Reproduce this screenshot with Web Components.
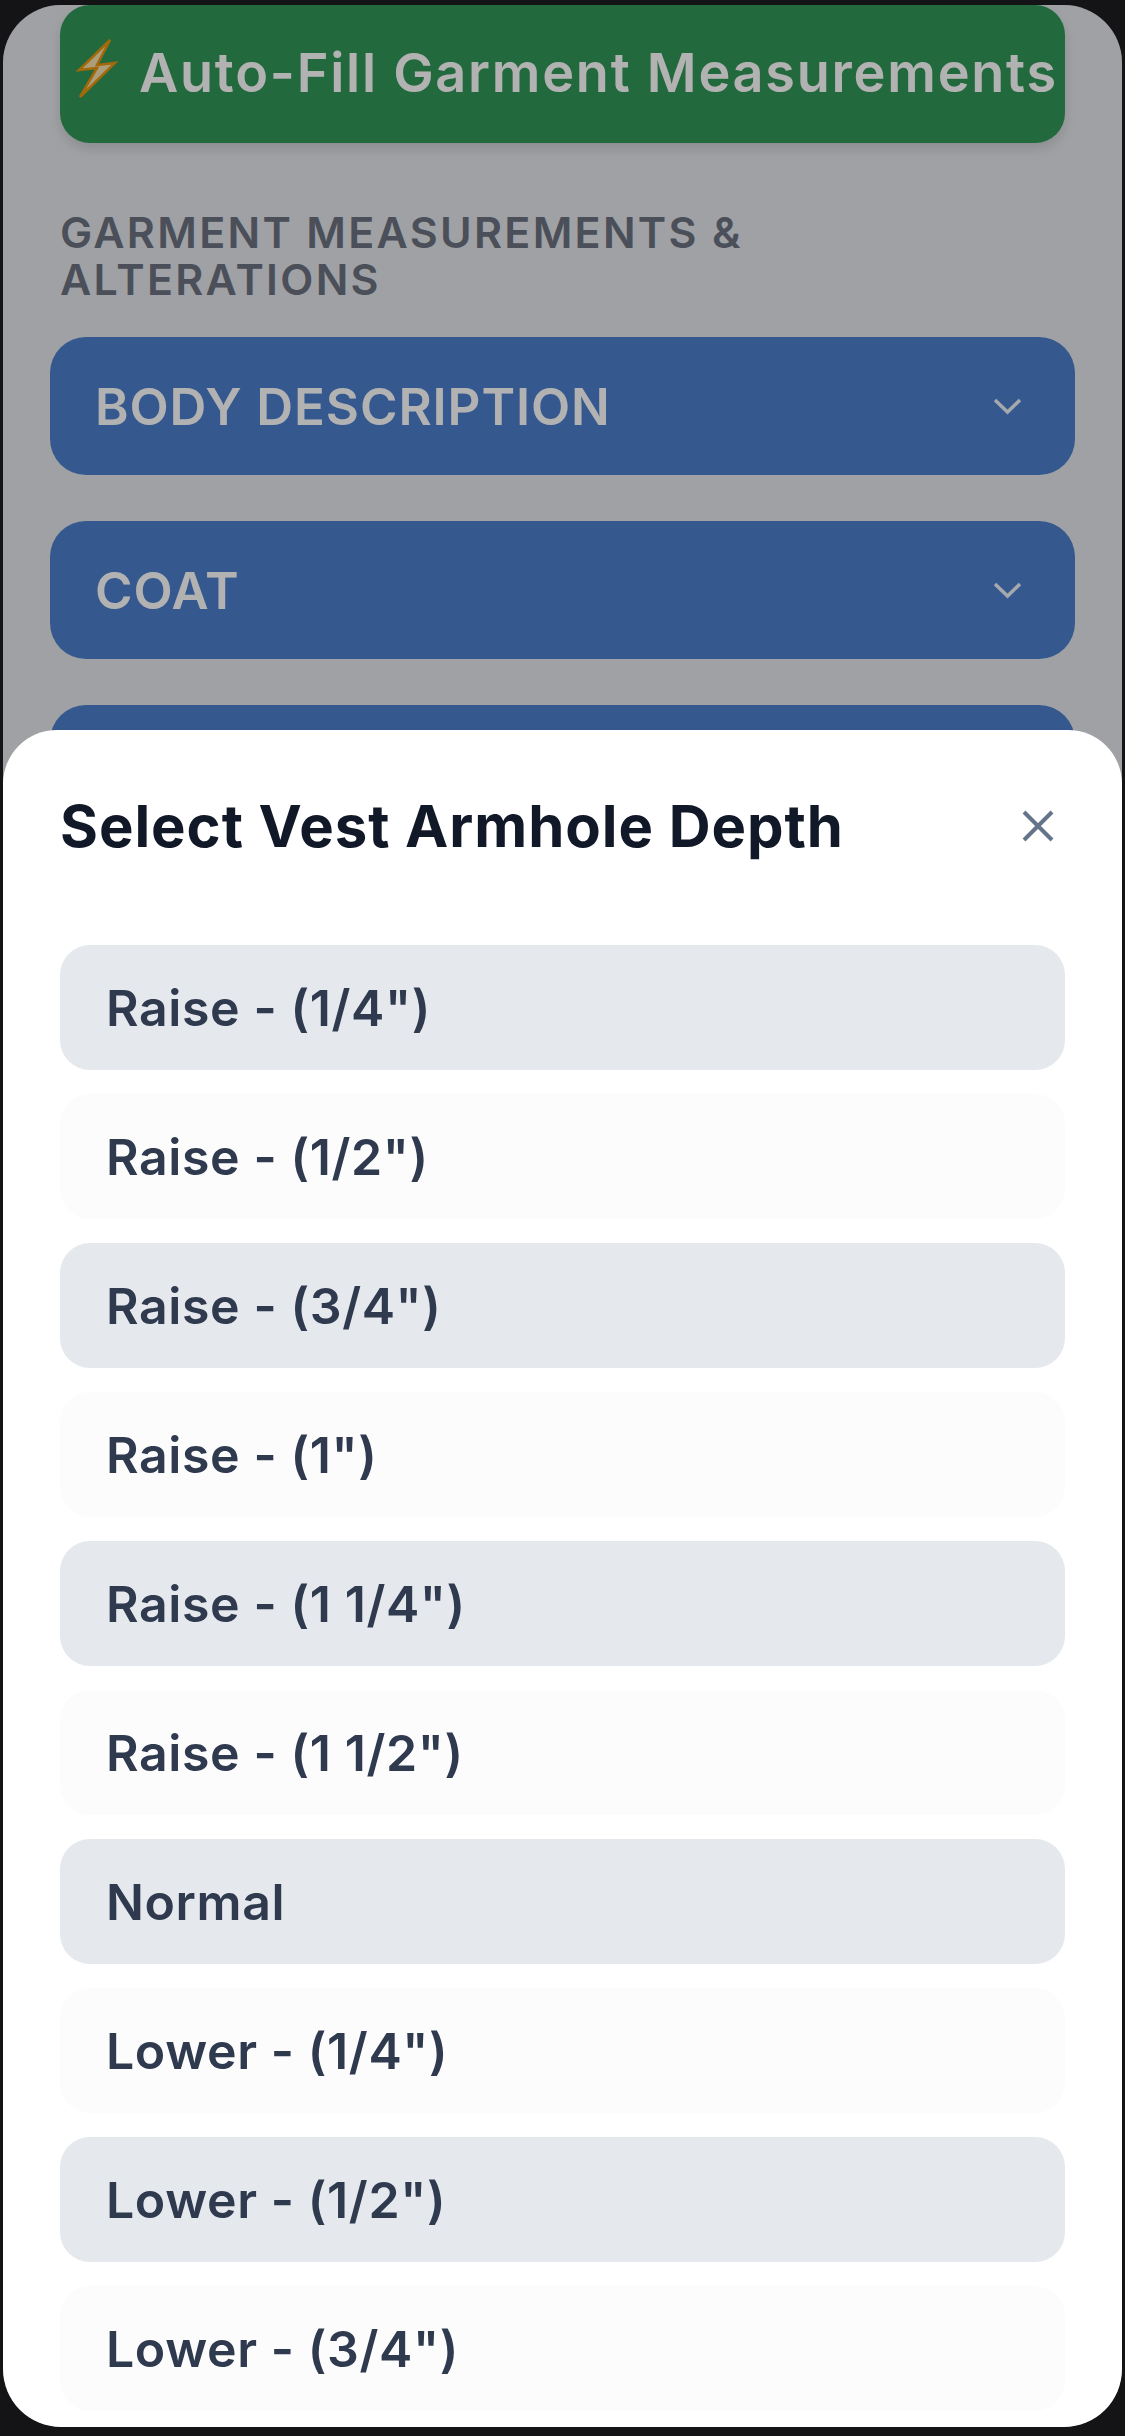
<!DOCTYPE html>
<html lang="en"><head><meta charset="utf-8"><title>Select Vest Armhole Depth</title>
<style>
html,body{margin:0;padding:0;background:#141416;}
body{width:1125px;height:2436px;overflow:hidden;font-family:Inter,"Liberation Sans",sans-serif;}
</style></head>
<body>
<phone-screen>
  <fill-button>Auto-Fill Garment Measurements</fill-button>
  <section-heading>Garment Measurements &amp; Alterations</section-heading>
  <accordion-card>Body Description</accordion-card>
  <accordion-card>Coat</accordion-card>
  <accordion-card></accordion-card>
  <modal-backdrop slot="overlay"></modal-backdrop>
  <bottom-sheet slot="overlay" heading="Select Vest Armhole Depth">
    <option-row>Raise - (1/4")</option-row>
    <option-row>Raise - (1/2")</option-row>
    <option-row>Raise - (3/4")</option-row>
    <option-row>Raise - (1")</option-row>
    <option-row>Raise - (1 1/4")</option-row>
    <option-row>Raise - (1 1/2")</option-row>
    <option-row>Normal</option-row>
    <option-row>Lower - (1/4")</option-row>
    <option-row>Lower - (1/2")</option-row>
    <option-row>Lower - (3/4")</option-row>
  </bottom-sheet>
</phone-screen>
<script>
function def(name,html,init){
  customElements.define(name,class extends HTMLElement{
    constructor(){super();this.attachShadow({mode:'open'}).innerHTML=html;}
    connectedCallback(){if(init)init(this);}
  });
}
def('phone-screen',`<style>
:host{display:block;position:relative;box-sizing:border-box;margin:5px 3px 0;width:1119px;height:2422px;background:#E5E7EB;border-radius:58px;overflow:hidden;}
.content{display:flex;flex-direction:column;}
</style><div class="content"><slot></slot></div><slot name="overlay"></slot>`);
def('fill-button',`<style>
:host{display:flex;align-items:center;box-sizing:border-box;height:138px;margin:0 57px;padding:0 0 4px 17px;gap:22px;background:#329758;border-radius:30px;color:#fff;font-size:54px;font-weight:600;letter-spacing:1.75px;white-space:nowrap;box-shadow:0 6px 12px rgba(0,0,0,.12);}
svg{flex:none;width:40px;height:59px;margin-bottom:8px;overflow:visible}
</style><svg viewBox="0 0 40 59"><path d="M33 1 2 31 20 29 3 58 38 24 20 26Z" fill="#f6e3b0" stroke="#e8960f" stroke-width="2.500" stroke-linejoin="miter"/></svg><span><slot></slot></span>`);
def('section-heading',`<style>
:host{display:block;margin:66px 57px 34px;color:#6b7280;font-size:43px;font-weight:600;line-height:47px;text-transform:uppercase;letter-spacing:2.3px;max-width:800px;}
</style><slot></slot>`);
def('accordion-card',`<style>
:host{display:flex;align-items:center;justify-content:space-between;box-sizing:border-box;height:138px;margin:0 47px 46px;padding:0 53px 0 45px;background:#4c7fcc;border-radius:36px;color:#fff;font-size:51px;font-weight:600;letter-spacing:.9px;text-transform:uppercase;}
svg{width:29px;height:16px;overflow:visible}
</style><span><slot></slot></span><svg viewBox="0 0 29 16"><path d="M2 2 14.500 14 27 2" fill="none" stroke="currentColor" stroke-width="3.500" opacity=".9"/></svg>`);
def('modal-backdrop',`<style>
:host{display:block;position:absolute;inset:0;background:rgba(0,0,0,.3);}
</style>`);
def('bottom-sheet',`<style>
:host{display:block;position:absolute;left:0;right:0;top:725px;bottom:0;background:#fff;border-radius:54px 54px 58px 58px;box-sizing:border-box;padding:0 57px;}
header{display:flex;align-items:center;justify-content:space-between;height:215px;padding:0 11px 23px 0;box-sizing:border-box;}
h2{margin:0;font-size:58px;font-weight:700;letter-spacing:.95px;color:#111827;}
svg{width:32px;height:32px;display:block;}
.list{display:flex;flex-direction:column;gap:24px;}
</style><header><h2></h2><svg viewBox="0 0 32 32"><path d="M2 2 30 30M30 2 2 30" fill="none" stroke="#64748b" stroke-width="4"/></svg></header><div class="list"><slot></slot></div>`,
el=>{el.shadowRoot.querySelector('h2').textContent=el.getAttribute('heading');});
def('option-row',`<style>
:host{display:flex;align-items:center;box-sizing:border-box;height:125px;padding:0 46px;border-radius:30px;background:#FCFCFD;color:#2f3a4f;font-size:50px;font-weight:600;letter-spacing:.6px;white-space:pre;}
:host(:nth-child(odd)){background:#E5E8EC;}
</style><slot></slot>`);
</script>
</body></html>
